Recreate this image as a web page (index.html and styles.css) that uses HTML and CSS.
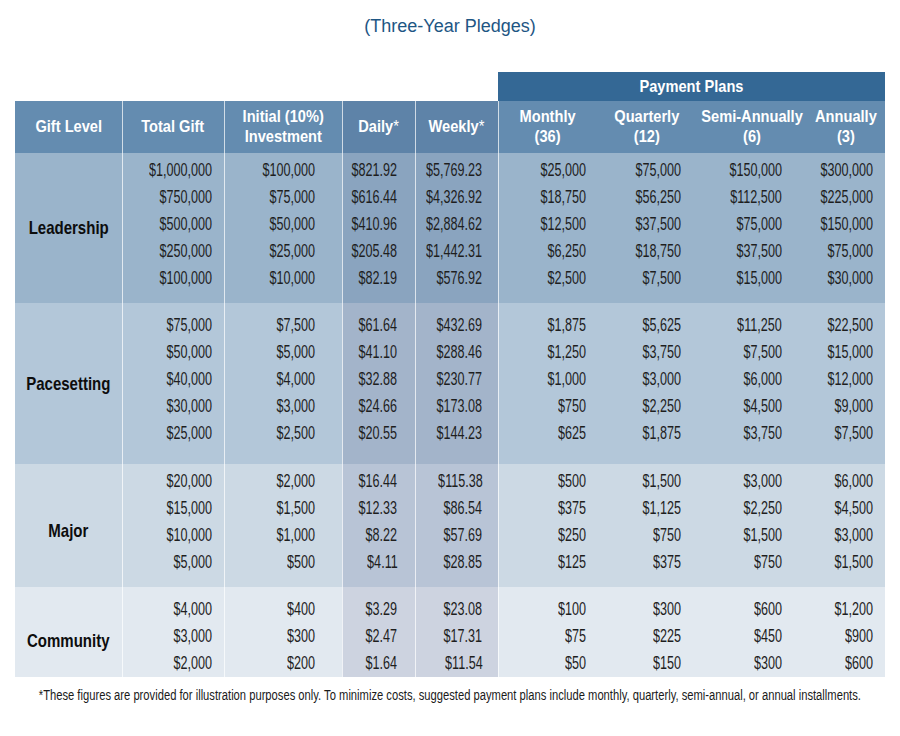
FILE: index.html
```html
<!DOCTYPE html>
<html>
<head>
<meta charset="utf-8">
<link rel="stylesheet" href="styles.css">
</head>
<body>
<h1 class="title">(Three-Year Pledges)</h1>
<table class="pledges">
  <colgroup>
    <col class="c-level"><col class="c-total"><col class="c-init"><col class="c-daily"><col class="c-weekly">
    <col class="c-mon"><col class="c-qtr"><col class="c-semi"><col class="c-ann">
  </colgroup>
  <thead>
    <tr class="plans-row">
      <th class="blank" colspan="5"></th>
      <th class="plans" colspan="4"><span class="h">Payment Plans</span></th>
    </tr>
    <tr class="head-row">
      <th class="sep"><span class="h">Gift Level</span></th>
      <th class="sep"><span class="h">Total Gift</span></th>
      <th class="sep"><span class="h">Initial (10%)<br>Investment</span></th>
      <th class="sep dark"><span class="h">Daily<span class="star">*</span></span></th>
      <th class="sep dark"><span class="h">Weekly<span class="star">*</span></span></th>
      <th><span class="h">Monthly<br>(36)</span></th>
      <th><span class="h">Quarterly<br>(12)</span></th>
      <th><span class="h">Semi-Annually<br>(6)</span></th>
      <th><span class="h">Annually<br>(3)</span></th>
    </tr>
  </thead>
  <tbody class="g-lead">
    <tr class="first"><th class="level sep" rowspan="5"><span class="lv">Leadership</span></th><td class="sep p-total"><span class="n">$1,000,000</span></td><td class="sep p-init"><span class="n">$100,000</span></td><td class="sep shade p-daily"><span class="n">$821.92</span></td><td class="sep shade p-weekly"><span class="n">$5,769.23</span></td><td class="p-mon"><span class="n">$25,000</span></td><td class="p-qtr"><span class="n">$75,000</span></td><td class="p-semi"><span class="n">$150,000</span></td><td class="p-ann"><span class="n">$300,000</span></td></tr>
    <tr><td class="sep p-total"><span class="n">$750,000</span></td><td class="sep p-init"><span class="n">$75,000</span></td><td class="sep shade p-daily"><span class="n">$616.44</span></td><td class="sep shade p-weekly"><span class="n">$4,326.92</span></td><td class="p-mon"><span class="n">$18,750</span></td><td class="p-qtr"><span class="n">$56,250</span></td><td class="p-semi"><span class="n">$112,500</span></td><td class="p-ann"><span class="n">$225,000</span></td></tr>
    <tr><td class="sep p-total"><span class="n">$500,000</span></td><td class="sep p-init"><span class="n">$50,000</span></td><td class="sep shade p-daily"><span class="n">$410.96</span></td><td class="sep shade p-weekly"><span class="n">$2,884.62</span></td><td class="p-mon"><span class="n">$12,500</span></td><td class="p-qtr"><span class="n">$37,500</span></td><td class="p-semi"><span class="n">$75,000</span></td><td class="p-ann"><span class="n">$150,000</span></td></tr>
    <tr><td class="sep p-total"><span class="n">$250,000</span></td><td class="sep p-init"><span class="n">$25,000</span></td><td class="sep shade p-daily"><span class="n">$205.48</span></td><td class="sep shade p-weekly"><span class="n">$1,442.31</span></td><td class="p-mon"><span class="n">$6,250</span></td><td class="p-qtr"><span class="n">$18,750</span></td><td class="p-semi"><span class="n">$37,500</span></td><td class="p-ann"><span class="n">$75,000</span></td></tr>
    <tr class="last"><td class="sep p-total"><span class="n">$100,000</span></td><td class="sep p-init"><span class="n">$10,000</span></td><td class="sep shade p-daily"><span class="n">$82.19</span></td><td class="sep shade p-weekly"><span class="n">$576.92</span></td><td class="p-mon"><span class="n">$2,500</span></td><td class="p-qtr"><span class="n">$7,500</span></td><td class="p-semi"><span class="n">$15,000</span></td><td class="p-ann"><span class="n">$30,000</span></td></tr>
  </tbody>
  <tbody class="g-pace">
    <tr class="first"><th class="level sep" rowspan="5"><span class="lv">Pacesetting</span></th><td class="sep p-total"><span class="n">$75,000</span></td><td class="sep p-init"><span class="n">$7,500</span></td><td class="sep shade p-daily"><span class="n">$61.64</span></td><td class="sep shade p-weekly"><span class="n">$432.69</span></td><td class="p-mon"><span class="n">$1,875</span></td><td class="p-qtr"><span class="n">$5,625</span></td><td class="p-semi"><span class="n">$11,250</span></td><td class="p-ann"><span class="n">$22,500</span></td></tr>
    <tr><td class="sep p-total"><span class="n">$50,000</span></td><td class="sep p-init"><span class="n">$5,000</span></td><td class="sep shade p-daily"><span class="n">$41.10</span></td><td class="sep shade p-weekly"><span class="n">$288.46</span></td><td class="p-mon"><span class="n">$1,250</span></td><td class="p-qtr"><span class="n">$3,750</span></td><td class="p-semi"><span class="n">$7,500</span></td><td class="p-ann"><span class="n">$15,000</span></td></tr>
    <tr><td class="sep p-total"><span class="n">$40,000</span></td><td class="sep p-init"><span class="n">$4,000</span></td><td class="sep shade p-daily"><span class="n">$32.88</span></td><td class="sep shade p-weekly"><span class="n">$230.77</span></td><td class="p-mon"><span class="n">$1,000</span></td><td class="p-qtr"><span class="n">$3,000</span></td><td class="p-semi"><span class="n">$6,000</span></td><td class="p-ann"><span class="n">$12,000</span></td></tr>
    <tr><td class="sep p-total"><span class="n">$30,000</span></td><td class="sep p-init"><span class="n">$3,000</span></td><td class="sep shade p-daily"><span class="n">$24.66</span></td><td class="sep shade p-weekly"><span class="n">$173.08</span></td><td class="p-mon"><span class="n">$750</span></td><td class="p-qtr"><span class="n">$2,250</span></td><td class="p-semi"><span class="n">$4,500</span></td><td class="p-ann"><span class="n">$9,000</span></td></tr>
    <tr class="last"><td class="sep p-total"><span class="n">$25,000</span></td><td class="sep p-init"><span class="n">$2,500</span></td><td class="sep shade p-daily"><span class="n">$20.55</span></td><td class="sep shade p-weekly"><span class="n">$144.23</span></td><td class="p-mon"><span class="n">$625</span></td><td class="p-qtr"><span class="n">$1,875</span></td><td class="p-semi"><span class="n">$3,750</span></td><td class="p-ann"><span class="n">$7,500</span></td></tr>
  </tbody>
  <tbody class="g-major">
    <tr class="first"><th class="level sep" rowspan="4"><span class="lv">Major</span></th><td class="sep p-total"><span class="n">$20,000</span></td><td class="sep p-init"><span class="n">$2,000</span></td><td class="sep shade p-daily"><span class="n">$16.44</span></td><td class="sep shade p-weekly"><span class="n">$115.38</span></td><td class="p-mon"><span class="n">$500</span></td><td class="p-qtr"><span class="n">$1,500</span></td><td class="p-semi"><span class="n">$3,000</span></td><td class="p-ann"><span class="n">$6,000</span></td></tr>
    <tr><td class="sep p-total"><span class="n">$15,000</span></td><td class="sep p-init"><span class="n">$1,500</span></td><td class="sep shade p-daily"><span class="n">$12.33</span></td><td class="sep shade p-weekly"><span class="n">$86.54</span></td><td class="p-mon"><span class="n">$375</span></td><td class="p-qtr"><span class="n">$1,125</span></td><td class="p-semi"><span class="n">$2,250</span></td><td class="p-ann"><span class="n">$4,500</span></td></tr>
    <tr><td class="sep p-total"><span class="n">$10,000</span></td><td class="sep p-init"><span class="n">$1,000</span></td><td class="sep shade p-daily"><span class="n">$8.22</span></td><td class="sep shade p-weekly"><span class="n">$57.69</span></td><td class="p-mon"><span class="n">$250</span></td><td class="p-qtr"><span class="n">$750</span></td><td class="p-semi"><span class="n">$1,500</span></td><td class="p-ann"><span class="n">$3,000</span></td></tr>
    <tr class="last"><td class="sep p-total"><span class="n">$5,000</span></td><td class="sep p-init"><span class="n">$500</span></td><td class="sep shade p-daily"><span class="n">$4.11</span></td><td class="sep shade p-weekly"><span class="n">$28.85</span></td><td class="p-mon"><span class="n">$125</span></td><td class="p-qtr"><span class="n">$375</span></td><td class="p-semi"><span class="n">$750</span></td><td class="p-ann"><span class="n">$1,500</span></td></tr>
  </tbody>
  <tbody class="g-comm">
    <tr class="first"><th class="level sep" rowspan="3"><span class="lv">Community</span></th><td class="sep p-total"><span class="n">$4,000</span></td><td class="sep p-init"><span class="n">$400</span></td><td class="sep shade p-daily"><span class="n">$3.29</span></td><td class="sep shade p-weekly"><span class="n">$23.08</span></td><td class="p-mon"><span class="n">$100</span></td><td class="p-qtr"><span class="n">$300</span></td><td class="p-semi"><span class="n">$600</span></td><td class="p-ann"><span class="n">$1,200</span></td></tr>
    <tr><td class="sep p-total"><span class="n">$3,000</span></td><td class="sep p-init"><span class="n">$300</span></td><td class="sep shade p-daily"><span class="n">$2.47</span></td><td class="sep shade p-weekly"><span class="n">$17.31</span></td><td class="p-mon"><span class="n">$75</span></td><td class="p-qtr"><span class="n">$225</span></td><td class="p-semi"><span class="n">$450</span></td><td class="p-ann"><span class="n">$900</span></td></tr>
    <tr class="last"><td class="sep p-total"><span class="n">$2,000</span></td><td class="sep p-init"><span class="n">$200</span></td><td class="sep shade p-daily"><span class="n">$1.64</span></td><td class="sep shade p-weekly"><span class="n">$11.54</span></td><td class="p-mon"><span class="n">$50</span></td><td class="p-qtr"><span class="n">$150</span></td><td class="p-semi"><span class="n">$300</span></td><td class="p-ann"><span class="n">$600</span></td></tr>
  </tbody>
</table>
<p class="note"><span class="note-text">*These figures are provided for illustration purposes only. To minimize costs, suggested payment plans include monthly, quarterly, semi-annual, or annual installments.</span></p>
</body>
</html>
```

FILE: styles.css
```css
html, body {
  margin: 0;
  padding: 0;
  background: #ffffff;
}
body {
  width: 900px;
  height: 736px;
  overflow: hidden;
  font-family: "Liberation Sans", Arial, sans-serif;
  color: #1a1a1a;
}
.title {
  margin: 0;
  padding-top: 13px;
  height: 72px;
  box-sizing: border-box;
  text-align: center;
  font-family: "Liberation Sans", Arial, sans-serif;
  font-weight: normal;
  font-size: 18px;
  line-height: 26px;
  color: #1e5684;
}
.pledges {
  margin-left: 15px;
  border-collapse: collapse;
  table-layout: fixed;
  width: 870px;
}
.c-level { width: 107px; }
.c-total { width: 102px; }
.c-init { width: 118px; }
.c-daily { width: 73px; }
.c-weekly { width: 83px; }
.c-mon { width: 98px; }
.c-qtr { width: 102px; }
.c-semi { width: 108px; }
.c-ann { width: 79px; }

.pledges th, .pledges td {
  padding: 0;
  white-space: nowrap;
}

/* condensed lettering (narrow typeface look) */
.h, .lv, .n, .note-text {
  display: inline-block;
}
.h {
  transform: scaleX(0.86);
  transform-origin: center center;
  margin: 0 -30px;
}
.lv {
  transform: scaleX(0.79);
  transform-origin: center center;
  margin: 0 -30px;
}
.n {
  transform: scaleX(0.7);
  transform-origin: right center;
  margin-left: -60px;
}
.note-text {
  transform: scaleX(0.8);
  transform-origin: center center;
  margin: 0 -150px;
  white-space: nowrap;
}
.star {
  font-weight: normal;
}

.plans-row th { height: 29px; }
.blank { background: #ffffff; }
.plans {
  background: #346895;
  color: #ffffff;
  font-size: 17px;
  font-weight: bold;
  text-align: center;
  vertical-align: middle;
}
.head-row th {
  height: 52px;
  background: #648cb0;
  color: #ffffff;
  font-size: 17px;
  font-weight: bold;
  line-height: 20px;
  text-align: center;
  vertical-align: middle;
}
.head-row th.dark { background: #5e83a8; }

.sep { border-right: 1px solid rgba(255, 255, 255, 0.7); }

.pledges td {
  font-size: 18px;
  line-height: 27px;
  height: 27px;
  text-align: right;
  color: #1e1e1e;
  vertical-align: middle;
}
.level {
  font-size: 19px;
  font-weight: bold;
  color: #0d0d0d;
  text-align: center;
  vertical-align: middle;
}
.g-major .level { padding-top: 10px; }
.g-comm .level { padding-top: 18px; }

.pledges .p-total { padding-right: 11px; }
.pledges .p-init { padding-right: 26px; }
.pledges .p-daily { padding-right: 17px; }
.pledges .p-weekly { padding-right: 15px; }
.pledges .p-mon { padding-right: 10px; }
.pledges .p-qtr { padding-right: 17px; }
.pledges .p-semi { padding-right: 24px; }
.pledges .p-ann { padding-right: 12px; }

.g-lead { background: #9ab4cb; }
.g-lead .shade { background: #8aa4bf; }
.g-pace { background: #b3c7d9; }
.g-pace .shade { background: #a3b4ca; }
.g-major { background: #ccd9e4; }
.g-major .shade { background: #b8c4d6; }
.g-comm { background: #e2e9f0; }
.g-comm .shade { background: #cdd3e0; }

.g-lead .first td { padding-top: 4px; }
.g-lead .last td { padding-bottom: 11px; }
.g-pace .first td { padding-top: 9px; }
.g-pace .last td { padding-bottom: 17px; }
.g-major .first td { padding-top: 4px; }
.g-major .last td { padding-bottom: 11px; }
.g-comm .first td { padding-top: 9px; }
.g-comm .last td { padding-bottom: 0; }

.note {
  margin: 8px 0 0;
  text-align: center;
  font-size: 14px;
  line-height: 20px;
  color: #1a1a1a;
}
```
